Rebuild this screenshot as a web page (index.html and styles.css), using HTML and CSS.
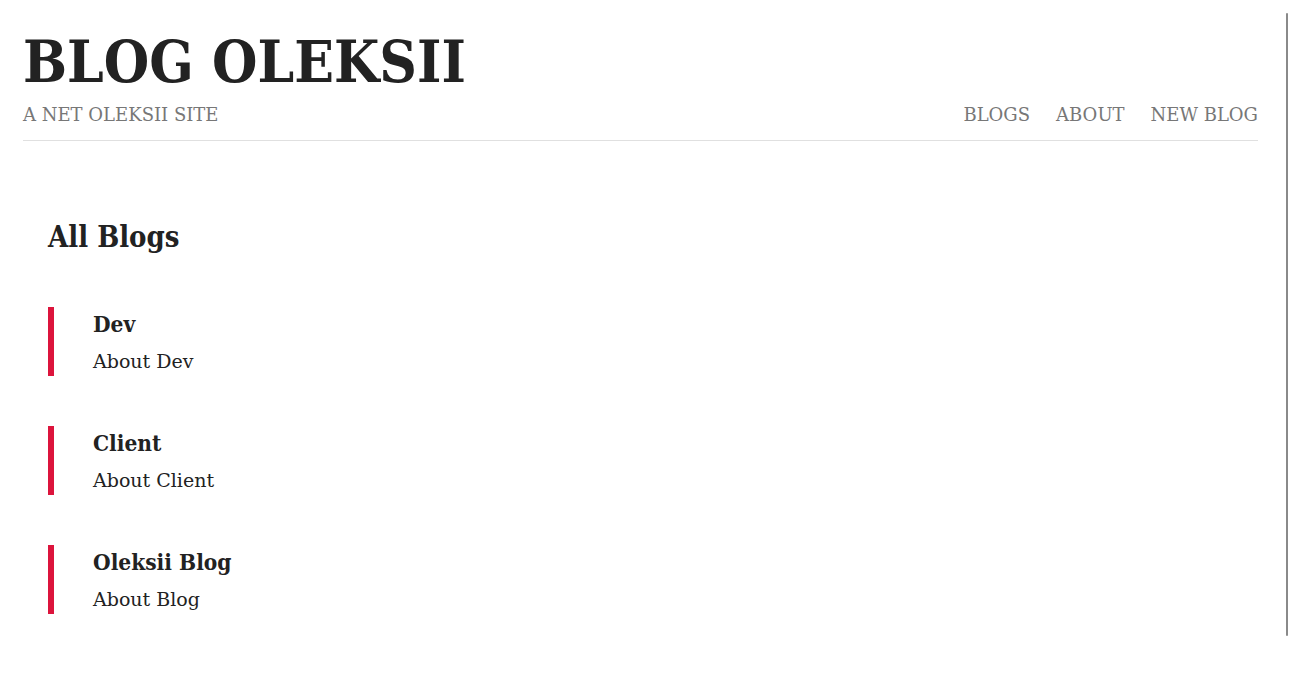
FILE: index.html
```html
<!DOCTYPE html>
<html lang="en">
<head>
<meta charset="utf-8">
<title>Blog Oleksii</title>
<link rel="stylesheet" href="styles.css">
</head>
<body>
<div class="page">
  <header class="site-header">
    <h1 class="site-title">BLOG OLEKSII</h1>
    <div class="header-row">
      <span class="tagline">A NET OLEKSII SITE</span>
      <nav class="nav">
        <a href="#">BLOGS</a>
        <a href="#">ABOUT</a>
        <a href="#">NEW BLOG</a>
      </nav>
    </div>
  </header>
  <main class="content">
    <h2 class="page-title">All Blogs</h2>
    <ul class="blog-list">
      <li class="blog-item">
        <h3 class="blog-name">Dev</h3>
        <p class="blog-desc">About Dev</p>
      </li>
      <li class="blog-item">
        <h3 class="blog-name">Client</h3>
        <p class="blog-desc">About Client</p>
      </li>
      <li class="blog-item">
        <h3 class="blog-name">Oleksii Blog</h3>
        <p class="blog-desc">About Blog</p>
      </li>
    </ul>
  </main>
</div>
<div class="scrollbar"></div>
</body>
</html>
```
FILE: styles.css
```css
* { box-sizing: border-box; }
html, body { margin: 0; padding: 0; background: #fff; overflow: hidden; }
body {
  font-family: "DejaVu Serif", "Liberation Serif", serif;
  color: #222;
}
.page {
  width: 1281px;
  padding: 0 23px;
}
.site-header {
  border-bottom: 1px solid #e0e0e0;
  padding-top: 27px;
  padding-bottom: 13px;
}
.site-title {
  margin: 0;
  font-family: "DejaVu Serif Condensed", "DejaVu Serif", serif;
  font-stretch: condensed;
  font-size: 58px;
  line-height: 70px;
  font-weight: bold;
  color: #222;
}
.header-row {
  display: flex;
  justify-content: space-between;
  align-items: baseline;
  margin-top: 6px;
}
.tagline, .nav a {
  font-size: 18px;
  line-height: 24px;
  color: #777;
  text-decoration: none;
}
.nav { display: flex; gap: 26px; }
.content { padding: 78px 25px 0; }
.page-title {
  margin: 0;
  font-family: "DejaVu Serif Condensed", "DejaVu Serif", serif;
  font-stretch: condensed;
  font-size: 29px;
  line-height: 36px;
  font-weight: bold;
}
.blog-list {
  list-style: none;
  margin: 52px 0 0;
  padding: 0;
  display: flex;
  flex-direction: column;
  gap: 50px;
}
.blog-item {
  border-left: 6px solid #dc143c;
  padding-left: 39px;
  height: 69px;
}
.blog-name {
  margin: 0;
  padding-top: 2px;
  font-family: "DejaVu Serif Condensed", "DejaVu Serif", serif;
  font-stretch: condensed;
  font-size: 22.5px;
  line-height: 30px;
  font-weight: bold;
}
.blog-desc {
  margin: 9px 0 0;
  font-size: 19px;
  line-height: 26px;
}
.scrollbar {
  position: fixed;
  top: 13px;
  right: 1px;
  width: 2px;
  height: 623px;
  background: #8a8a8a;
  border-radius: 1px;
}
```
